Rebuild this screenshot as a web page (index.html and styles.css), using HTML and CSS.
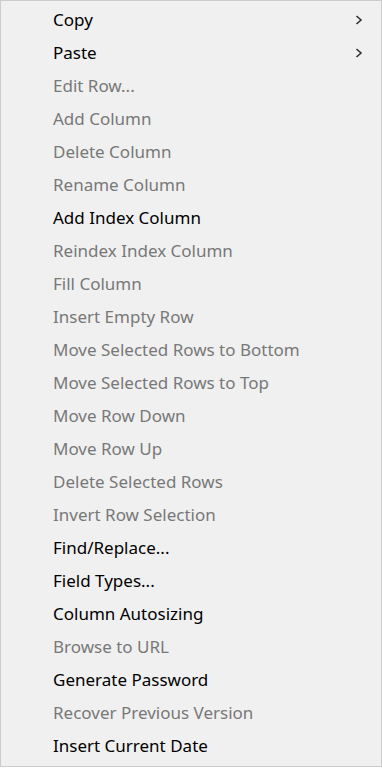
FILE: index.html
```html
<!DOCTYPE html>
<html>
<head>
<meta charset="utf-8">
<link rel="stylesheet" href="styles.css">
</head>
<body>
<div class="menu">
  <div class="item"><span class="label">Copy</span><svg class="arrow" width="8" height="10" viewBox="0 0 8 10"><path d="M1.5 1 L6 5 L1.5 9" fill="none" stroke="#333" stroke-width="1.6"/></svg></div>
  <div class="item"><span class="label">Paste</span><svg class="arrow" width="8" height="10" viewBox="0 0 8 10"><path d="M1.5 1 L6 5 L1.5 9" fill="none" stroke="#333" stroke-width="1.6"/></svg></div>
  <div class="item off"><span class="label">Edit Row...</span></div>
  <div class="item off"><span class="label">Add Column</span></div>
  <div class="item off"><span class="label">Delete Column</span></div>
  <div class="item off"><span class="label">Rename Column</span></div>
  <div class="item"><span class="label">Add Index Column</span></div>
  <div class="item off"><span class="label">Reindex Index Column</span></div>
  <div class="item off"><span class="label">Fill Column</span></div>
  <div class="item off"><span class="label">Insert Empty Row</span></div>
  <div class="item off"><span class="label">Move Selected Rows to Bottom</span></div>
  <div class="item off"><span class="label">Move Selected Rows to Top</span></div>
  <div class="item off"><span class="label">Move Row Down</span></div>
  <div class="item off"><span class="label">Move Row Up</span></div>
  <div class="item off"><span class="label">Delete Selected Rows</span></div>
  <div class="item off"><span class="label">Invert Row Selection</span></div>
  <div class="item"><span class="label">Find/Replace...</span></div>
  <div class="item"><span class="label">Field Types...</span></div>
  <div class="item"><span class="label">Column Autosizing</span></div>
  <div class="item off"><span class="label">Browse to URL</span></div>
  <div class="item"><span class="label">Generate Password</span></div>
  <div class="item off"><span class="label">Recover Previous Version</span></div>
  <div class="item"><span class="label">Insert Current Date</span></div>
</div>
</body>
</html>
```
FILE: styles.css
```css
html, body {
  margin: 0;
  padding: 0;
  background: #ffffff;
}
.menu {
  box-sizing: border-box;
  width: 382px;
  height: 767px;
  background: #f0f0f0;
  border: 1px solid #cccccc;
  padding: 2px 0 3px 0;
  display: flex;
  flex-direction: column;
  font-family: "Noto Sans", "Open Sans", sans-serif;
  font-size: 17px;
  color: #000000;
}
.item {
  height: 33px;
  flex: none;
  display: flex;
  align-items: center;
  padding-left: 52px;
  padding-right: 18px;
}
.label {
  flex: 1;
  white-space: nowrap;
}
.off {
  color: #787878;
}
.arrow {
  display: block;
}
```
